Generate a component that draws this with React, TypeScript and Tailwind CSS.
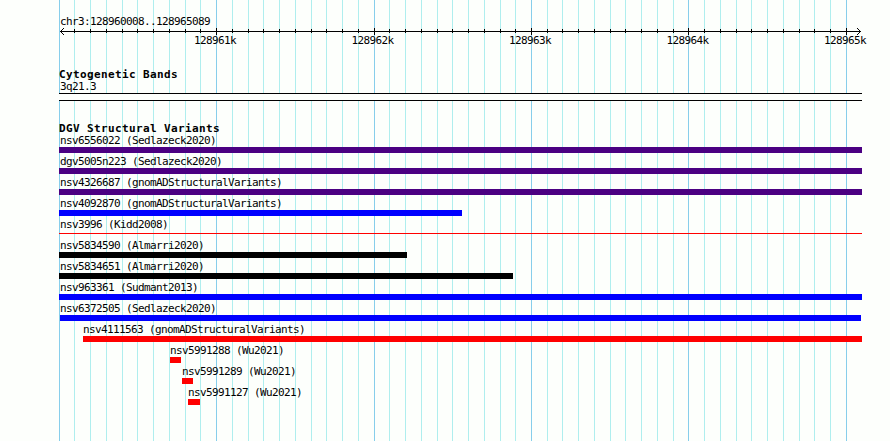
import React from "react";

type Variant = {
  name: string;
  start: number;
  end: number;
  color: string;
  thin?: boolean;
};

// start and end are pixels from the left edge of the panel
const variants: Variant[] = [
  { name: "nsv6556022 (Sedlazeck2020)", start: 0, end: 803, color: "bg-[#4b0082]" },
  { name: "dgv5005n223 (Sedlazeck2020)", start: 0, end: 803, color: "bg-[#4b0082]" },
  { name: "nsv4326687 (gnomADStructuralVariants)", start: 0, end: 803, color: "bg-[#4b0082]" },
  { name: "nsv4092870 (gnomADStructuralVariants)", start: 0, end: 403, color: "bg-[#0000ff]" },
  { name: "nsv3996 (Kidd2008)", start: 0, end: 803, color: "bg-[#ff0000]", thin: true },
  { name: "nsv5834590 (Almarri2020)", start: 0, end: 348, color: "bg-black" },
  { name: "nsv5834651 (Almarri2020)", start: 0, end: 454, color: "bg-black" },
  { name: "nsv963361 (Sudmant2013)", start: 0, end: 803, color: "bg-[#0000ff]" },
  { name: "nsv6372505 (Sedlazeck2020)", start: 1, end: 802, color: "bg-[#0000ff]" },
  { name: "nsv4111563 (gnomADStructuralVariants)", start: 24, end: 803, color: "bg-[#ff0000]" },
  { name: "nsv5991288 (Wu2021)", start: 111, end: 122, color: "bg-[#ff0000]" },
  { name: "nsv5991289 (Wu2021)", start: 123, end: 134, color: "bg-[#ff0000]" },
  { name: "nsv5991127 (Wu2021)", start: 129, end: 141, color: "bg-[#ff0000]" },
];

// one tick for every 100 bp, a major one for every 1000 bp
const ticks = Array.from({ length: 50 }, (_, i) => ({
  x: Math.floor(15.89 + 15.745 * i),
  major: i % 10 === 9,
}));

const positions = ["128961k", "128962k", "128963k", "128964k", "128965k"];

const GridLines: React.FC = () => (
  <svg
    className="absolute inset-0 -z-10"
    width="803"
    height="441"
    shapeRendering="crispEdges"
  >
    <rect x="0" y="0" width="1" height="441" fill="#87ceeb" />
    {ticks.map(({ x, major }) => (
      <rect
        key={x}
        x={x}
        y="0"
        width="1"
        height="441"
        fill={major ? "#87ceeb" : "#afeeee"}
      />
    ))}
  </svg>
);

const Ruler: React.FC = () => (
  <div className="h-[41px]">
    <svg
      className="block"
      width="803"
      height="9"
      shapeRendering="crispEdges"
    >
      <rect x="1" y="4" width="801" height="1" />
      {ticks.map(({ x, major }) => (
        <rect
          key={x}
          x={x}
          y={major ? 1 : 2}
          width="1"
          height={major ? 7 : 4}
        />
      ))}
      <path d="M2 3h1v1h-1zM3 2h1v1h-1zM4 1h1v1h-1zM2 5h1v1h-1zM3 6h1v1h-1zM4 7h1v1h-1z" />
      <path d="M800 3h1v1h-1zM799 2h1v1h-1zM798 1h1v1h-1zM800 5h1v1h-1zM799 6h1v1h-1zM798 7h1v1h-1z" />
    </svg>
    <div className="flex gap-[115.5px] pl-[135px] -mt-[2px]">
      {positions.map((p) => (
        <span key={p} className="w-[42px] h-[13px]">
          {p}
        </span>
      ))}
    </div>
  </div>
);

const TrackTitle: React.FC<{ children: React.ReactNode }> = ({ children }) => (
  <h2 className="h-[12px] font-bold tracking-[0.38px]">{children}</h2>
);

const VariantRow: React.FC<{ variant: Variant }> = ({ variant }) => {
  const { name, start, end, color, thin } = variant;
  return (
    <div className="h-[21px]">
      <div className="h-[13px]" style={{ paddingLeft: Math.max(start, 1) }}>
        {name}
      </div>
      <div
        className={`${color} ${thin ? "mt-[2px] h-px" : "h-[6px]"}`}
        style={{ marginLeft: start, width: end - start }}
      />
    </div>
  );
};

const App: React.FC = () => {
  return (
    <div className="h-[441px] w-[890px] overflow-hidden bg-[#fdfffc] pl-[59px]">
      <main className="relative isolate h-full w-[803px] pt-[15px] font-['DejaVu_Sans_Mono',monospace] text-[11px] leading-[13px] tracking-[-0.62px] whitespace-nowrap text-black">
        <GridLines />
        <div className="h-[12px] pl-px">chr3:128960008..128965089</div>
        <Ruler />

        <section className="h-[54px]">
          <TrackTitle>Cytogenetic Bands</TrackTitle>
          <div className="h-[13px] pl-px">3q21.3</div>
          <div className="h-[8px] border-y border-black bg-[#fdfffc]" />
        </section>

        <section>
          <TrackTitle>DGV Structural Variants</TrackTitle>
          {variants.map((v) => (
            <VariantRow key={v.name} variant={v} />
          ))}
        </section>
      </main>
    </div>
  );
};

export default App;
